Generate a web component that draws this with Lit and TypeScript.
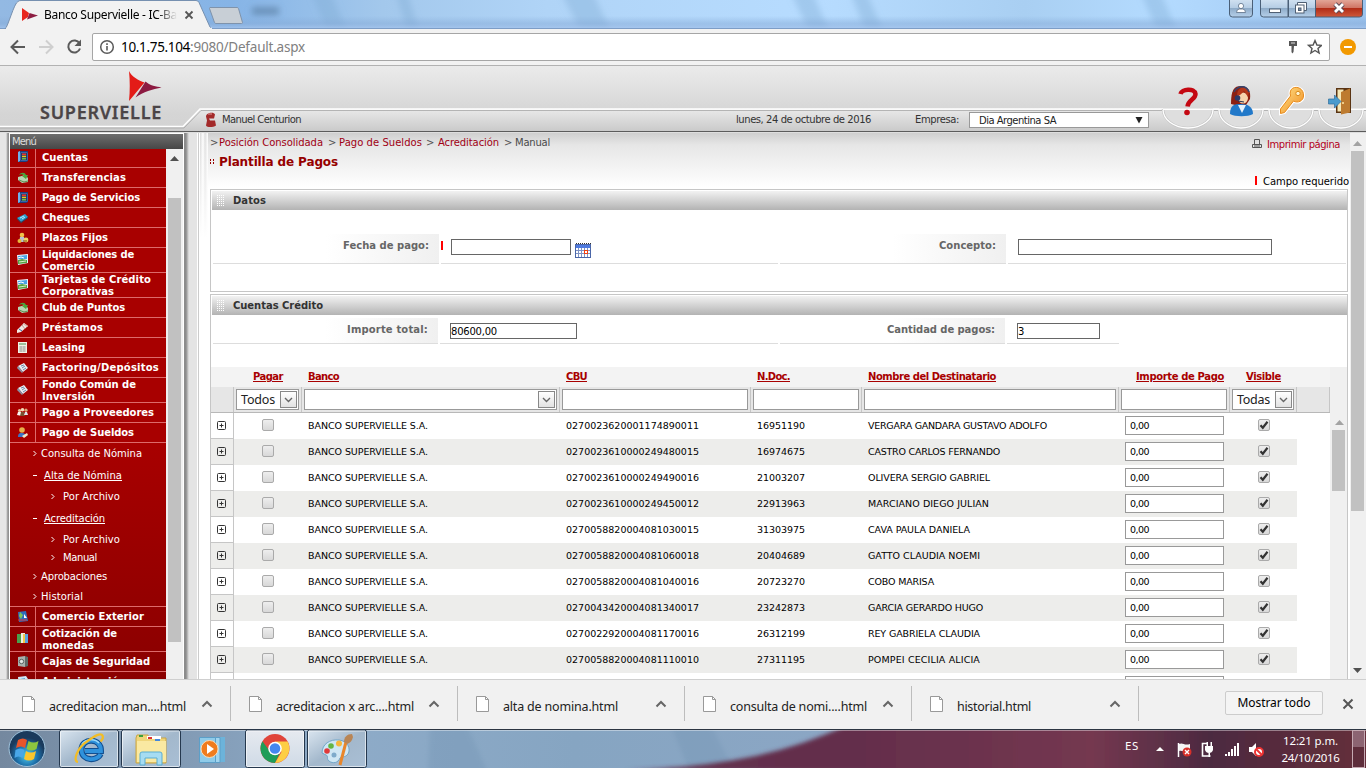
import { LitElement, html, css, svg } from "lit";
import { customElement } from "lit/decorators.js";
import { classMap } from "lit/directives/class-map.js";

type MenuEntry = { icon: string; lines: [string, number][] };

const MENU_TOP: MenuEntry[] = [
  { icon: "book", lines: [["Cuentas", 46]] },
  { icon: "transfer", lines: [["Transferencias", 84]] },
  { icon: "book", lines: [["Pago de Servicios", 98]] },
  { icon: "cheque", lines: [["Cheques", 48]] },
  { icon: "coins", lines: [["Plazos Fijos", 66]] },
  { icon: "photo", lines: [["Liquidaciones de", 92], ["Comercio", 53]] },
  { icon: "photo", lines: [["Tarjetas de Crédito", 109], ["Corporativas", 72]] },
  { icon: "transfer", lines: [["Club de Puntos", 83]] },
  { icon: "pen", lines: [["Préstamos", 61]] },
  { icon: "calc", lines: [["Leasing", 43]] },
  { icon: "card", lines: [["Factoring/Depósitos", 117]] },
  { icon: "card", lines: [["Fondo Común de", 94], ["Inversión", 53]] },
  { icon: "people", lines: [["Pago a Proveedores", 112]] },
  { icon: "user", lines: [["Pago de Sueldos", 92]] },
];

const MENU_BOTTOM: MenuEntry[] = [
  { icon: "globe", lines: [["Comercio Exterior", 102]] },
  { icon: "files", lines: [["Cotización de", 75], ["monedas", 52]] },
  { icon: "safe", lines: [["Cajas de Seguridad", 108]] },
  { icon: "page", lines: [["Administración", 83]] },
];

// [text, width, level, row height]
const SUBMENU: [string, number, string, string][] = [
  ["Consulta de Nómina", 101, "leaf", "h22"],
  ["Alta de Nómina", 78, "open", "h22"],
  ["Por Archivo", 57, "deep", "h20"],
  ["Acreditación", 61, "open", "h23"],
  ["Por Archivo", 57, "deep", "h19"],
  ["Manual", 34, "deep", "h17"],
  ["Aprobaciones", 66, "leaf", "h21"],
  ["Historial", 42, "leaf", "h20"],
];

const PAYEES: [string, string, string, number][] = [
  ["0270023620001174890011", "16951190", "VERGARA GANDARA GUSTAVO ADOLFO", 179],
  ["0270023610000249480015", "16974675", "CASTRO CARLOS FERNANDO", 132],
  ["0270023610000249490016", "21003207", "OLIVERA SERGIO GABRIEL", 122],
  ["0270023610000249450012", "22913963", "MARCIANO DIEGO JULIAN", 121],
  ["0270058820004081030015", "31303975", "CAVA PAULA DANIELA", 102],
  ["0270058820004081060018", "20404689", "GATTO CLAUDIA NOEMI", 112],
  ["0270058820004081040016", "20723270", "COBO MARISA", 66],
  ["0270043420004081340017", "23242873", "GARCIA GERARDO HUGO", 115],
  ["0270022920004081170016", "26312199", "REY GABRIELA CLAUDIA", 112],
  ["0270058820004081110010", "27311195", "POMPEI CECILIA ALICIA", 112],
];

const DOWNLOADS: [string, number][] = [
  ["acreditacion man....html", 137],
  ["acreditacion x arc....html", 138],
  ["alta de nomina.html", 115],
  ["consulta de nomi....html", 137],
  ["historial.html", 74],
];

const ICONS: Record<string, unknown> = {
  book: svg`<path d="M1 1l2-1h8v10l-2 1H1z" fill="#1c3d7c"/><path d="M1 1l2-1v10l-2 1z" fill="#6fb0ea"/><path d="M3.500 1.500h7v8h-7z" fill="#5e8fd0"/><path d="M4 2h6v7H4z" fill="#243a63"/><path d="M5 2.500h4v1.500H5z" fill="#e33"/><path d="M5 4.700h4v1.500H5z" fill="#f5c518"/><path d="M5 7h4v1.500H5z" fill="#6ac04a"/>`,
  transfer: svg`<path d="M1 5l7-2 3 3v4l-6 1-4-3z" fill="#b9d3b2"/><path d="M2 3c2-3 6-3 7 0h2L9 7 5 4h2C6 2 4 2 2 3z" fill="#4ba53c"/><path d="M2 8l5 2 4-1" stroke="#5d8f50" fill="none"/>`,
  cheque: svg`<path d="M0 6l8-4 3 3-7 5z" fill="#2a9fd0"/><path d="M0 6l4 4v1L0 7zM4 10l7-5v1l-7 5z" fill="#0d5677"/><path d="M3 6l4-2M5 7l3-2" stroke="#bfe9f8"/>`,
  coins: svg`<circle cx="5" cy="3" r="2.3" fill="#f0c24a"/><path d="M2 10l1-5h4l1 5z" fill="#b8bfd4"/><circle cx="2.5" cy="9" r="2" fill="#e8b83a"/><circle cx="9" cy="8" r="2.4" fill="#f2d166"/><path d="M6 9h4" stroke="#7a5410"/>`,
  photo: svg`<path d="M0 1l11-1v9L1 11z" fill="#eaf5ff"/><path d="M1 2l9-1v4H1z" fill="#4aa3e6"/><path d="M1 4l3-1 3 1" stroke="#fff" fill="none"/><path d="M1 6l4-1 5 1v3l-9 1z" fill="#56a543"/><path d="M2 8l7-1" stroke="#d9ecc9"/>`,
  pen: svg`<path d="M0 8l7-7 4 3-7 6-4 1z" fill="#f0e9e3"/><path d="M5 3l3 4" stroke="#c09a8c"/><path d="M7 1l4 3-1 1-4-3z" fill="#d9b3a6"/><path d="M2 7l3 2" stroke="#3b68a8"/>`,
  calc: svg`<path d="M1 0h9v11H1z" fill="#f1f1e6"/><path d="M2 1h7v2H2z" fill="#9fc09a"/><path d="M2 5h7M2 7h7M2 9h7M4 4v6M7 4v6" stroke="#9a9a92" stroke-width=".7"/>`,
  card: svg`<path d="M1 4l6-3 4 5-5 4z" fill="#e8edf3"/><path d="M1 4l5 6-1 1-5-5z" fill="#8795a8"/><path d="M4 4l3-1M5 6l3-2M6 8l3-2" stroke="#3b5c83" stroke-width=".7"/>`,
  people: svg`<circle cx="2.5" cy="3.5" r="1.6" fill="#e9c7a0"/><circle cx="5.5" cy="2.8" r="1.8" fill="#f3d7b4"/><circle cx="9" cy="3.2" r="1.6" fill="#d8a87a"/><path d="M0 8l1-3h3l1 4z" fill="#f4f4f4"/><path d="M3 9l1-4h3l1 4z" fill="#7a5030"/><path d="M7 8l1-3h2l1 3z" fill="#dfe6ee"/>`,
  user: svg`<circle cx="5" cy="3" r="2.8" fill="#e8b04a"/><path d="M1 10c0-4 2-4 4-4s4 1 4 4z" fill="#3d6fc4"/><path d="M5 9l5-3 1 2-4 3z" fill="#f3e7c4"/>`,
  globe: svg`<path d="M1 1l8-1 2 10-9 1z" fill="#2e6dbb"/><path d="M3 1l3 3-2 4-2-3z" fill="#7ec25b"/><path d="M7 3l3 4H7z" fill="#fff"/><path d="M1 9h9" stroke="#d33"/>`,
  files: svg`<path d="M0 1h4v9H0z" fill="#4aa04d"/><path d="M4 0h4v10H4z" fill="#f2efe0"/><path d="M6 1h2v9H6z" fill="#f2c94a"/><path d="M8 1h3v9H8z" fill="#58a3dd"/>`,
  safe: svg`<path d="M1 1l7-1v11l-7-1z" fill="#a8b0ac"/><path d="M8 0l3 1v9l-3 1z" fill="#5f6b68"/><circle cx="4.5" cy="5.5" r="2.2" fill="#dfe4e2" stroke="#58625f"/>`,
  page: svg`<path d="M1 1l8-1 2 3v8l-9 1z" fill="#cfe6f5"/><path d="M3 3l5-1v4l-5 1z" fill="#5ba4cf"/>`,
};

/** Text that is tracked to an exact width in pixels. */
const t = (text: string, width: number) => html`<span class="fit" data-w=${width}>${text}</span>`;

@customElement("app-root")
export class AppRoot extends LitElement {
  static styles = css`
    :host { display: block; width: 1366px; height: 768px; overflow: hidden; background: #fff; font-family: "DejaVu Sans", Verdana, sans-serif; font-size: 10px; color: #000; }
    * { box-sizing: border-box; }
    svg { display: block; flex: none; }
    .fit { display: inline-block; white-space: nowrap; flex: none; }
    .stack { display: grid; }
    .stack > * { grid-area: 1 / 1; }
    .ui { font-family: "Noto Sans", "Open Sans", sans-serif; font-size: 12px; }

    .titlebar { height: 29px; }
    .tab { display: flex; align-items: center; padding-left: 44px; height: 29px; }
    .tab .name { width: 133px; overflow: hidden; -webkit-mask-image: linear-gradient(90deg, #000 85%, transparent); }

    .toolbar { height: 37px; background: #f2f2f2; border-bottom: 1px solid #b2b2b2; display: flex; align-items: center; padding-bottom: 1px; }
    .omnibox { width: 1238px; height: 28px; background: #fff; border: 1px solid #a6a6a6; border-radius: 2px; display: flex; align-items: center; padding: 0 7px 0 6px; }
    .omnibox .url { flex: 1; padding-left: 6px; font-size: 13.5px; color: #808080; display: flex; }
    .black { color: #000; }

    .header { height: 67px; }
    .brand { display: flex; flex-direction: column; align-items: flex-start; padding: 36px 0 0 40px; font: 600 18px/20px "Noto Sans", sans-serif; color: #4b4547; -webkit-text-stroke: .3px #4b4547; }
    .session { display: flex; align-items: center; height: 21px; padding-left: 222px; margin-top: 43px; color: #333; }
    .who { width: 514px; }
    .date { width: 179px; }
    .company { width: 54px; }
    .combo { width: 180px; height: 16px; border: 1px solid #999; background: #fff; display: flex; align-items: center; justify-content: space-between; padding: 0 5px 0 9px; color: #222; margin-top: 1px; }

    .body { height: 546px; display: flex; overflow: hidden; }
    .rail { width: 10px; background: linear-gradient(90deg, #e6e6e6 0 6px, #bbb 7px, #8c8c8c 8px, #999 9px, #fff 9px); }
    .rail2 { width: 17px; background: linear-gradient(90deg, #fff 1px, #8c8c8c 1px 3px, #aaa 4px, #e4e4e4 6px 14px, #fff 14px 15px, #ccc 15px 16px, #fff 16px); }
    .side { width: 173px; display: flex; flex-direction: column; padding-top: 1px; }
    .sidehead { height: 15px; background: linear-gradient(#6e6e6e, #474747); color: #ddd; padding-left: 2px; line-height: 16px; font-size: 10px; }
    .sidebody { height: 530px; display: flex; }
    .menu { width: 156px; height: 530px; overflow: hidden; background: linear-gradient(#a80000 0 55%, #8a0000); color: #fff; }
    .item { display: flex; height: 20px; border-bottom: 1px solid #dd6a6a; font-weight: 700; line-height: 12px; }
    .item.first { height: 19px; }
    .item.two { height: 25px; }
    .ico { width: 26px; border-right: 1px solid #dd6a6a; display: flex; align-items: center; padding-left: 7px; }
    .lab { padding-left: 6px; display: flex; flex-direction: column; justify-content: center; padding-top: 1px; }
    .item.first .lab, .item.first .ico { padding-bottom: 2px; }
    .submenu { height: 164px; border-bottom: 1px solid #dd6a6a; }
    .sub { display: flex; align-items: center; gap: 6px; padding-bottom: 1px; }
    .leaf { padding-left: 23px; gap: 4px; }
    .open { padding-left: 23px; gap: 7px; }
    .open .fit { text-decoration: underline; }
    .deep { padding-left: 41px; gap: 8px; }
    .h17 { height: 17px; } .h19 { height: 19px; } .h20 { height: 20px; } .h21 { height: 21px; } .h22 { height: 22px; } .h23 { height: 23px; }

    .main { width: 1150px; height: 546px; display: flex; }
    .shade { width: 8px; height: 546px; background: linear-gradient(transparent, #fff 105px), linear-gradient(90deg, #d8d8d8, #fff 3px, #ddd 5px, #fff); }
    .page { width: 1142px; padding: 1px 1px 0 2px; background: linear-gradient(#cfcfcf, #e6e6e6 12px, #fff 54px); height: 546px; overflow: hidden; }
    .crumbs { display: flex; justify-content: space-between; height: 18px; align-items: center; color: #555; padding-right: 9px; }
    .trail { display: flex; padding-bottom: 1px; }
    .trail a { color: #a00014; }
    .trail .here { color: #4a4a4a; }
    .g9 { width: 9px; } .g109 { width: 109px; } .g11 { width: 11px; } .g87 { width: 87px; } .g12 { width: 12px; } .g66 { width: 66px; }
    .print { display: flex; align-items: center; gap: 5px; color: #b3001b; padding-top: 2px; }
    .title { display: flex; height: 19px; align-items: center; color: #960000; font: 700 12px "DejaVu Sans", sans-serif; gap: 5px; }
    .required { display: flex; height: 18px; align-items: center; justify-content: flex-end; gap: 6px; padding-top: 2px; }
    .bar { width: 2px; height: 9px; background: #f00; }
    .required .bar { margin-bottom: 2px; }
    .panel { border: 1px solid #c6c6c6; background: #fff; padding-top: 1px; width: 1138px; }
    .datos { height: 103px; margin-bottom: 2px; }
    .credito { height: 400px; }
    .phead { height: 19px; background: linear-gradient(#f2f2f2, #b3b3b3); margin-left: 1px; display: flex; align-items: center; gap: 9px; padding-left: 4px; font-weight: 700; color: #333; }
    .frow { display: flex; gap: 2px; padding-left: 2px; }
    .datos .frow { height: 30px; margin-top: 24px; }
    .credito .frow { height: 26px; margin-top: 3px; }
    .flabel { width: 226px; display: flex; justify-content: flex-end; padding: 5px 10px 0 0; background: linear-gradient(90deg, #fff 50%, #f0f0f0); border-bottom: 1px solid #ddd; color: #666; font-weight: 700; line-height: 13px; }
    .credito .flabel { width: 225px; }
    .fval { border-bottom: 1px solid #ddd; display: flex; padding: 5px 0 0 10px; }
    .datos .fval.req { padding-left: 0; gap: 8px; }
    .req .bar { margin-top: 2px; }
    .box { height: 16px; border: 1px solid #666; background: #fff; display: flex; align-items: center; }
    .wa { width: 337px; } .wb { width: 338px; } .wc { width: 112px; } .wd { width: 338px; }
    .i120 { width: 120px; } .i254 { width: 254px; } .i127 { width: 127px; } .i83 { width: 83px; }
    .cal { padding-top: 3px; margin-left: -4px; }

    .grid { display: flex; margin-top: 23px; width: 1136px; }
    .tbl { width: 1119px; }
    .tscroll { width: 17px; background: #f0f0f0; height: 330px; padding: 50px 0 0 2px; display: flex; flex-direction: column; gap: 5px; }
    .tscroll svg { margin-left: 3px; margin-top: 3px; }
    .thumb { width: 13px; background: #c1c1c1; }
    .t61 { height: 61px; } .t360 { height: 360px; } .t444 { height: 444px; }
    .cols { display: grid; grid-template-columns: 23px 68px 258px 191px 111px 257px 111px 67px 33px; }
    .thead { height: 20px; background: #f3f3f3; color: #a80000; font-weight: 700; align-items: center; padding-bottom: 1px; }
    .thead .fit { text-decoration: underline; }
    .thead > * { padding-left: 6px; }
    .thead .mid { padding-left: 0; text-align: center; }
    .thead .end { text-align: right; padding-right: 6px; }
    .tfilter { height: 26px; background: #e6e6e6; border-bottom: 1px solid #b8b8b8; }
    .tfilter > * { border-right: 1px solid #c6c6c6; padding: 2px; display: flex; }
    .fbox { flex: 1; height: 21px; background: #fff; border: 1px solid #999; display: flex; align-items: center; justify-content: space-between; padding: 0 1px 0 4px; font: 12.5px/17px "Noto Sans", sans-serif; color: #222; }
    .fbox .fit { margin-top: -1px; }
    .drop { width: 17px; height: 17px; border: 1px solid #888; background: linear-gradient(#fff, #e2e2e2); display: flex; align-items: center; justify-content: center; margin-left: auto; }
    .trow { height: 26px; font-size: 9.5px; background: #fff; width: 1086px; grid-template-columns: 23px 68px 258px 191px 111px 257px 111px 67px; }
    .trow.alt { background: #ededeb; }
    .trow > * { display: flex; align-items: center; padding: 0 0 1px 6px; }
    .trow .plus { border-right: 1px solid #c6c6c6; border-bottom: 1px solid #c6c6c6; padding-bottom: 0; }
    .trow .mid { padding: 0; justify-content: center; padding-bottom: 2px; }
    .amount { width: 99px; height: 19px; border: 1px solid #999; background: #fff; padding-left: 4px; display: flex; align-items: center; }
    .check { width: 12px; height: 12px; border: 1px solid #aaa; border-radius: 2px; background: linear-gradient(#eee, #d8d8d8); }

    .vscroll { width: 16px; background: #f0f0f0; display: flex; flex-direction: column; align-items: center; height: 546px; padding: 8px 1px 0 0; }
    .vscroll .thumb { margin-top: 5px; }
    .vscroll .down { margin-top: 157px; }
    .mscroll { width: 17px; background: #f0f0f0; height: 530px; padding: 7px 0 0 2px; }
    .mscroll svg { margin: 0 0 37px 2px; }

    .shelf { height: 50px; background: #f1f1f1; border-top: 1px solid #cfcfcf; display: flex; align-items: center; padding-bottom: 2px; }
    .dl { width: 227px; display: flex; align-items: center; height: 35px; padding-left: 18px; }
    .dl + .dl { border-left: 1px solid #bdbdbd; }
    .dl:first-child { padding-left: 22px; width: 230px; }
    .dl .nm { width: 166px; padding: 5px 0 0 14px; color: #222; font-size: 12.5px; }
    .dlend { border-left: 1px solid #bdbdbd; height: 35px; width: 87px; }
    .all { width: 98px; height: 24px; border: 1px solid #ccc; border-radius: 2px; background: #f4f4f4; display: flex; align-items: center; justify-content: center; margin: -2px 19px 0 0; }

    .taskbar { height: 39px; }
    .tray { display: flex; color: #fff; padding-left: 1125px; font-size: 11.5px; line-height: 17px; }
    .es { padding-top: 8px; width: 148px; }
    .clock { padding-top: 3px; width: 75px; display: flex; flex-direction: column; align-items: center; }
  `;

  protected firstUpdated() {
    this.renderRoot.querySelectorAll<HTMLElement>(".fit").forEach((el) => {
      const extra = Number(el.dataset.w) - el.getBoundingClientRect().width;
      const n = (el.textContent ?? "").length;
      el.style.letterSpacing = `${extra / n}px`;
    });
  }

  private arrow(up: boolean, color = "#505050") {
    return html`<svg width="9" height="5"><path d=${up ? "M0 5L4.5 0 9 5z" : "M0 0l4.500 5L9 0z"} fill=${color} /></svg>`;
  }

  private titlebar() {
    return html`<div class="titlebar stack">
      <svg width="1366" height="29">
        <defs>
          <linearGradient id="sky"><stop offset="0" stop-color="#93b9e3"/><stop offset=".17" stop-color="#86b4e6"/><stop offset=".28" stop-color="#a3c8ec"/><stop offset=".4" stop-color="#b0d4f7"/><stop offset=".6" stop-color="#b7dcff"/><stop offset=".75" stop-color="#a9cff2"/><stop offset=".85" stop-color="#b4dbff"/><stop offset="1" stop-color="#9dc4ee"/></linearGradient>
          <linearGradient id="fade" x2="0" y2="1"><stop offset=".55" stop-color="#86abd8" stop-opacity="0"/><stop offset=".8" stop-color="#86abd8" stop-opacity=".5"/><stop offset="1" stop-color="#a9c8f0" stop-opacity=".9"/></linearGradient>
          <linearGradient id="btn" x2="0" y2="1"><stop offset="0" stop-color="#cfe0f0"/><stop offset=".5" stop-color="#b3cbe3"/><stop offset=".5" stop-color="#8facc9"/><stop offset="1" stop-color="#b6d0ea"/></linearGradient>
          <linearGradient id="cls" x2="0" y2="1"><stop offset="0" stop-color="#e2a597"/><stop offset=".45" stop-color="#d07565"/><stop offset=".5" stop-color="#b22d18"/><stop offset="1" stop-color="#cf5a3c"/></linearGradient>
          <filter id="soft"><feGaussianBlur stdDeviation="3"/></filter>
        </defs>
        <rect width="1366" height="29" fill="url(#sky)"/>
        <g filter="url(#soft)"><path d="M310 -9h20l20 47h-20zM395 -9h12l14 47h-12zM560 -9h32l22 47h-30zM790 -9h22l20 47h-20zM850 -9h16l20 47h-18zM1140 -9h20l20 47h-20z" fill="#80add4" opacity=".4"/><rect x="252" y="7" width="27" height="8" fill="#55789c" opacity=".6"/></g>
        <rect width="1366" height="29" fill="url(#fade)"/>
        <path d="M0 28.500H1366" stroke="#7d9dc6"/>
        <path d="M5 29C8 27 14 3 18 1.500q1-1 3-1h175q2 0 3 2L210 27l2 2z" fill="#f2f2f2" stroke="#7690b0"/>
        <path d="M6 28.600h206" stroke="#f2f2f2" stroke-width="1.500"/>
        <path d="M210 7.500h27q1 0 1.500 1l4 14q0 1-1 1H216q-1 0-1.500-1l-5-14q0-1 .5-1z" fill="#c8cfd6" stroke="#7f93ab"/>
        <path d="M22 8l7 5-1 4-6 4z" fill="#e8251e"/><path d="M29.500 13l8.500 2.500-11 4z" fill="#8d1d42"/>
        <path d="M185.500 11.500l7 7m0-7l-7 7" stroke="#555" stroke-width="1.800"/>
        <g stroke="#4a5f77"><path d="M1229.500 0v14q0 3 3 3h17q3 0 3-3V0" fill="url(#btn)"/><path d="M1260.500 0v14q0 3 3 3h24.500V0" fill="url(#btn)"/><path d="M1288.500 0v17h27V0" fill="url(#btn)"/><path d="M1315.500 0v17h44q3 0 3-3V0" fill="url(#cls)"/></g>
        <circle cx="1241" cy="6" r="2.600" fill="#fff" stroke="#5b6f86" stroke-width=".8"/><path d="M1236.500 12.500q0-3.500 3-3.500h3q3 0 3 3.500z" fill="#fff" stroke="#5b6f86" stroke-width=".8"/>
        <rect x="1269.500" y="9" width="11" height="3.500" fill="#fff" stroke="#4f5f73"/>
        <path d="M1297.500 2.500h9v8h-9z" fill="#fff" stroke="#4f5f73"/><rect x="1295.500" y="5" width="8.500" height="8" fill="#fff" stroke="#4f5f73"/><rect x="1298.500" y="8" width="2.500" height="2.500" fill="#7890ab" stroke="#4f5f73"/>
        <path d="M1335 4l8 8m0-8l-8 8" stroke="#5c4a55" stroke-width="4.600"/><path d="M1335 4l8 8m0-8l-8 8" stroke="#fff" stroke-width="2.800"/>
      </svg>
      <div class="tab ui"><div class="name">${t("Banco Supervielle - IC-Ba", 133)}</div></div>
    </div>`;
  }

  private toolbar() {
    return html`<div class="toolbar">
      <svg width="92" height="34" fill="none" stroke="#5a5a5a" stroke-width="2"><path d="M25 17H12m6-6.500L11.500 17l6.500 6.500"/><path d="M39 17h13m-6-6.500l6.500 6.500-6.500 6.500" stroke="#cfcfcf"/><path d="M79.500 13.500a6 6 0 1 0 .5 5"/><path d="M81 9.500v6.500h-6.500z" fill="#5a5a5a" stroke="none"/></svg>
      <div class="omnibox ui">
        <svg width="16" height="16"><circle cx="8" cy="8" r="6.300" fill="none" stroke="#5a5a5a" stroke-width="1.500"/><path d="M8 7v4.500M8 4.300v1.600" stroke="#5a5a5a" stroke-width="1.600"/></svg>
        <div class="url"><span class="black">${t("10.1.75.104", 69)}</span>${t(":9080/Default.aspx", 115)}</div>
        <svg width="38" height="18"><path d="M5 3h8v5h-3l-.500 6-1.200 1.500-.8-1.500V8H5z" fill="#555"/><path d="M7 5h4" stroke="#ddd"/><path d="M31 2.500l1.900 4.500 4.600.400-3.500 3 1.100 4.600-4.100-2.500-4.100 2.500 1.100-4.600-3.500-3 4.600-.400z" fill="none" stroke="#555" stroke-width="1.400"/></svg>
      </div>
      <svg width="36" height="20"><circle cx="18" cy="10" r="8" fill="#f29900"/><path d="M14 10h8" stroke="#fff" stroke-width="2"/></svg>
    </div>`;
  }

  private header() {
    return html`<div class="header stack">
      <svg width="1366" height="67">
        <defs><linearGradient id="h1" x2="0" y2="1"><stop offset="0" stop-color="#ebebeb"/><stop offset=".7" stop-color="#d5d5d5"/><stop offset="1" stop-color="#d2d2d2"/></linearGradient><linearGradient id="h2" x2="0" y2="1"><stop offset="0" stop-color="#e9e9e9"/><stop offset="1" stop-color="#cacaca"/></linearGradient>
        <linearGradient id="key" x2="1" y2="1"><stop offset="0" stop-color="#ffe38a"/><stop offset="1" stop-color="#f08a1c"/></linearGradient></defs>
        <rect width="1366" height="67" fill="url(#h1)"/>
        <path d="M0 61h184l17-18h1165v22H0z" fill="url(#h2)"/>
        <path d="M0 60.500h183l17-17.500h1166" fill="none" stroke="#fff" stroke-width="1.500"/><path d="M0 62h184l17-17.500h1165" fill="none" stroke="#a8a8a8" opacity=".8"/>
        <path d="M0 65h1366v2H0z" fill="#5c5c5c"/><path d="M0 66.500h1366" stroke="#fff" opacity=".8"/>
        <path d="M129 5c2 5 10 10 15.500 11.500L129 35c1-10 1-20 0-30z" fill="#e31b17"/><path d="M145.500 15.500c4 4 11 5 16 6-9 2-18 4-26 10z" fill="#8c1a41"/>
        <g transform="translate(0 -2.500)"><path d="M206 53c0-4 8-5 9-2l-1 4h-5l1 2h5l1 5c-3 2-9 2-10 0l1-5z" fill="#a32a2a"/><path d="M208 50.500h4" stroke="#e09a9a"/></g>
        ${[1188, 1241, 1291, 1341].map((x, i) => { const r = i ? 22 : 25; return svg`<path d=${`M${x - r} 42.500h${2 * r}a${r} 19.500 0 0 1 ${-2 * r} 0z`} fill="#dedede"/><path d=${`M${x - r} 43a${r} 19 0 0 0 ${2 * r} 0`} fill="none" stroke="#c4c4c4" stroke-width="2.500"/><path d=${`M${x - r} 43.500a${r} 18.500 0 0 0 ${2 * r} 0`} fill="none" stroke="#fff" stroke-width="1.300"/>`; })}
        <path d="M1163 43.500h203" stroke="#fff"/>
        <path d="M1180.500 28c1-5 14-6.500 15 0 0 5.500-7 5.500-8 12.500" fill="none" stroke="#c40812" stroke-width="4.500"/><circle cx="1187" cy="46.500" r="2.800" fill="#c40812"/>
        <path d="M1231 38c0-14 3-18 10-18s10 5 9 13l-4 6h-11z" fill="#8c2012"/><ellipse cx="1243" cy="32" rx="5" ry="5.500" fill="#f6d3ad"/><path d="M1237 30c3 0 5-3 7-5l4 6 1-6c-4-6-12-4-12 5z" fill="#b3381b"/><path d="M1230 48c0-9 4-10 11-10s12 3 12 10c-5 3-18 3-23 0z" fill="#2279c9"/><path d="M1238 39l4 8 4-8z" fill="#e7f2fb"/><circle cx="1237.500" cy="32" r="2.800" fill="#2b3968"/><path d="M1234 26c3-6 12-8 15 0" fill="none" stroke="#33446f" stroke-width="1.500"/><path d="M1238 35l6 1" stroke="#26304f"/>
        <path d="M1293.500 35l-9 11.500-4 1v-4.500l10-13c-3-12 14-11 13 0 0 5-6 7.500-10 5z" fill="url(#key)" stroke="#fff" stroke-width="3"/><path d="M1293.500 35l-9 11.500-4 1v-4.500l10-13c-3-12 14-11 13 0 0 5-6 7.500-10 5z" fill="url(#key)" stroke="#e78a1b"/><circle cx="1298" cy="27.500" r="2.200" fill="#fff4d0" stroke="#d98b1b"/>
        <path d="M1336 22h15v25h-15z" fill="#5a3413"/><path d="M1337.500 23.500h6v22h-6z" fill="#f6e7b5"/><path d="M1341 26l9-3.500v24l-9 2z" fill="#bd7b30"/><circle cx="1343" cy="37" r="1" fill="#ffe9a8"/><path d="M1328.500 33h6v-4l6.500 6.500-6.500 6.500v-4h-6z" fill="#4a9bcd" stroke="#2f6f9c" stroke-width=".7"/>
      </svg>
      <div class="brand">${t("SUPERVIELLE", 122)}</div>
      <div class="session">
        <div class="who">${t("Manuel Centurion", 79)}</div><div class="date">${t("lunes, 24 de octubre de 2016", 135)}</div><div class="company">${t("Empresa:", 44)}</div>
        <div class="combo">${t("Dia Argentina SA", 77)}<svg width="8" height="8"><path d="M.5 1h7L4 7.500z" fill="#222"/></svg></div>
      </div>
    </div>`;
  }

  private entry(m: MenuEntry, first = false) {
    return html`<div class=${classMap({ item: true, first, two: m.lines.length > 1 })}>
      <div class="ico"><svg width="12" height="12">${ICONS[m.icon]}</svg></div>
      <div class="lab">${m.lines.map(([s, w]) => html`<div>${t(s, w)}</div>`)}</div>
    </div>`;
  }

  private sidebar() {
    return html`<div class="side">
      <div class="sidehead">${t("Menú", 24)}</div>
      <div class="sidebody">
        <div class="menu">
          ${MENU_TOP.map((m, i) => this.entry(m, i === 0))}
          <div class="submenu">
            ${SUBMENU.map(([s, w, level, h]) => html`<div class=${`sub ${level} ${h}`}>
              <svg width="4" height="7" fill="none" stroke="#fff">${level === "open" ? svg`<path d="M0 3.500h4"/>` : svg`<path d="M.5 1l2.500 2.500L.5 6"/>`}</svg>${t(s, w)}</div>`)}
          </div>
          ${MENU_BOTTOM.map((m) => this.entry(m))}
        </div>
        <div class="mscroll">${this.arrow(true)}<div class="thumb t444"></div></div>
      </div>
    </div>`;
  }

  private panelHead(s: string, w: number) {
    return html`<div class="phead"><svg width="8" height="11"><path d="M1.500 0v11M3.500 0v11M5.500 0v11M7.500 0v11" stroke="#fff" stroke-dasharray="1 1"/></svg>${t(s, w)}</div>`;
  }

  private drop() {
    return html`<div class="drop"><svg width="9" height="6"><path d="M1 1l3.500 3.500L8 1" fill="none" stroke="#666" stroke-width="1.400"/></svg></div>`;
  }

  private row(p: [string, string, string, number] | null, i: number) {
    return html`<div class=${classMap({ cols: true, trow: true, alt: i % 2 === 1 })}>
      <div class="plus"><svg width="10" height="10" fill="none" stroke="#333"><rect x=".5" y=".5" width="8" height="8" rx="1"/><path d="M2.500 4.500h4M4.500 2.500v4"/></svg></div>
      <div class="mid"><div class="check"></div></div>
      <div>${p ? t("BANCO SUPERVIELLE S.A.", 120) : ""}</div>
      <div>${p ? t(p[0], 133) : ""}</div>
      <div>${p ? t(p[1], 48) : ""}</div>
      <div>${p ? t(p[2], p[3]) : ""}</div>
      <div><div class="amount">${p ? t("0,00", 19) : ""}</div></div>
      <div class="mid"><div class="check"><svg width="10" height="10"><path d="M1.500 5.200l2.300 2.500L8.500 1.800" fill="none" stroke="#333" stroke-width="2.200"/></svg></div></div>
    </div>`;
  }

  private page() {
    return html`<div class="page">
      <div class="crumbs">
        <div class="trail">
          <div class="g9">${t(">", 7)}</div><a class="g109">${t("Posición Consolidada", 104)}</a>
          <div class="g11">${t(">", 7)}</div><a class="g87">${t("Pago de Sueldos", 83)}</a>
          <div class="g12">${t(">", 7)}</div><a class="g66">${t("Acreditación", 61)}</a>
          <div class="g11">${t(">", 7)}</div><div class="here">${t("Manual", 35)}</div>
        </div>
        <div class="print"><svg width="10" height="10" fill="none" stroke="#555"><path d="M2.500 5V.5h5V5M.5 5.500h9v3h-9zM2 7h6"/></svg>${t("Imprimir página", 73)}</div>
      </div>
      <div class="title"><svg width="4" height="5" fill="#960000"><path d="M0 0h1v2H0zM3 0h1v2H3zM0 3h1v2H0zM3 3h1v2H3z"/></svg>${t("Plantilla de Pagos", 119)}</div>
      <div class="required"><div class="bar"></div>${t("Campo requerido", 86)}</div>
      <div class="panel datos">
        ${this.panelHead("Datos", 33)}
        <div class="frow">
          <div class="flabel">${t("Fecha de pago:", 86)}</div>
          <div class="fval req wa"><div class="bar"></div><div class="box i120"></div>
            <div class="cal"><svg width="16" height="16"><rect x=".5" y="2.500" width="15" height="13" fill="#fff" stroke="#4a66a8"/><path d="M1 3h14v3H1z" fill="#4f7ae0"/><path d="M1 8.500h14M1 11.500h14M3.500 6v9M6.500 6v9M9.500 6v9M12.500 6v9" stroke="#7f93c4"/><path d="M1 1.500h15" stroke="#333" stroke-dasharray="1 1"/><rect x="9.500" y="8.500" width="3" height="3" fill="#fff" stroke="#f04010"/></svg></div>
          </div>
          <div class="flabel">${t("Concepto:", 57)}</div>
          <div class="fval wb"><div class="box i254"></div></div>
        </div>
      </div>
      <div class="panel credito">
        ${this.panelHead("Cuentas Crédito", 90)}
        <div class="frow">
          <div class="flabel">${t("Importe total:", 81)}</div>
          <div class="fval wd"><div class="box i127">${t("80600,00", 46)}</div></div>
          <div class="flabel">${t("Cantidad de pagos:", 108)}</div>
          <div class="fval wc"><div class="box i83">${t("3", 6)}</div></div>
        </div>
        <div class="grid">
          <div class="tbl">
            <div class="cols thead"><div></div><div class="mid">${t("Pagar", 30)}</div><div>${t("Banco", 31)}</div><div>${t("CBU", 21)}</div><div>${t("N.Doc.", 33)}</div><div>${t("Nombre del Destinatario", 128)}</div><div class="end">${t("Importe de Pago", 88)}</div><div class="mid">${t("Visible", 35)}</div></div>
            <div class="cols tfilter"><div></div><div><div class="fbox">${t("Todos", 34)}${this.drop()}</div></div><div><div class="fbox">${this.drop()}</div></div><div><div class="fbox"></div></div><div><div class="fbox"></div></div><div><div class="fbox"></div></div><div><div class="fbox"></div></div><div><div class="fbox">${t("Todas", 33)}${this.drop()}</div></div><div></div></div>
            ${PAYEES.map((p, i) => this.row(p, i))}
            ${this.row(null, 10)}
          </div>
          <div class="tscroll">${this.arrow(true, "#a3a3a3")}<div class="thumb t61"></div></div>
        </div>
      </div>
    </div>`;
  }

  private taskbar() {
    return html`<div class="taskbar stack">
      <svg width="1366" height="39">
        <defs>
          <linearGradient id="tb"><stop offset="0" stop-color="#74889f"/><stop offset=".25" stop-color="#8eabc8"/><stop offset=".42" stop-color="#86a5c2"/><stop offset=".6" stop-color="#8ba6c4"/></linearGradient>
          <linearGradient id="wine"><stop offset="0" stop-color="#65324e"/><stop offset=".3" stop-color="#642e4c"/><stop offset=".6" stop-color="#743850"/><stop offset=".75" stop-color="#4c2a40"/><stop offset="1" stop-color="#6b3038"/></linearGradient>
          <linearGradient id="act" x2="1" y2="1"><stop offset="0" stop-color="#dbe6f0"/><stop offset=".5" stop-color="#a3b8cc"/><stop offset="1" stop-color="#a9bfd5"/></linearGradient>
          <linearGradient id="act2" x2="0" y2="1"><stop offset="0" stop-color="#e6eaf0"/><stop offset="1" stop-color="#cfdae6"/></linearGradient>
          <radialGradient id="orb" cy=".7"><stop offset="0" stop-color="#4fd0f5"/><stop offset=".6" stop-color="#1c6ea8"/><stop offset="1" stop-color="#1a3a5c"/></radialGradient>
          <filter id="b2"><feGaussianBlur stdDeviation="2"/></filter>
        </defs>
        <rect width="1366" height="39" fill="url(#tb)"/>
        <path d="M430 -6h36l22 50h-60zM670 -6h40l25 50h-45z" fill="#7394b3" opacity=".35" filter="url(#b2)"/>
        <path d="M625 41C730 38 790 22 845 -3h560v50z" fill="url(#wine)" filter="url(#b2)"/>
        <path d="M0 .5h1366" stroke="#2c3542"/><path d="M0 1.500h1366" stroke="#fff" opacity=".4"/>
        <g stroke="#25384e"><rect x="59.500" y="1" width="59" height="37.500" rx="2" fill="url(#act)"/><rect x="121.500" y="1" width="59" height="37.500" rx="2" fill="url(#act)"/><rect x="245.500" y="1" width="59" height="37.500" rx="2" fill="url(#act2)"/><rect x="307.500" y="1" width="59" height="37.500" rx="2" fill="url(#act)"/></g>
        <g fill="none" stroke="#fff" opacity=".6"><rect x="60.500" y="2" width="57" height="35.500" rx="1"/><rect x="122.500" y="2" width="57" height="35.500" rx="1"/><rect x="246.500" y="2" width="57" height="35.500" rx="1"/><rect x="308.500" y="2" width="57" height="35.500" rx="1"/></g>
        <circle cx="27" cy="19.500" r="18" fill="url(#orb)" stroke="#9fc3dc"/>
        <path d="M18 11q5-3 9 0l-2 8q-4-3-9 0z" fill="#e8562b"/><path d="M28.500 12q5 3 10 0l-2 8q-5 3-10 0z" fill="#8cc63f"/><path d="M15.500 21q5-3 9 0l-2 8q-4-3-8 0z" fill="#49a7e8"/><path d="M26 22q5 3 10 0l-2 8q-5 3-10 0z" fill="#fbc62d"/>
        <g transform="translate(-1 1)"><path d="M101.500 24c-2.500 7-19 8-19-4.500 0-12 20-12 19.500 1.500H86" fill="none" stroke="#124f90" stroke-width="6"/><path d="M101.500 24c-2.500 7-19 8-19-4.500 0-12 20-12 19.500 1.500H86" fill="none" stroke="#2f92dc" stroke-width="3.800"/><path d="M83 14c4-5 13-6 17-1" fill="none" stroke="#9bd9fa" stroke-width="1.500"/><path d="M79 32c-6-1 0-15 9-20.500 8-6 14-9 15.500-6s-1 5-2 6" fill="none" stroke="#f3bd25" stroke-width="2.200"/></g>
        <path d="M136 9l1-3h11l1 3h17v25h-30z" fill="#f0d67a" stroke="#c9a545"/><path d="M137 12h29v21h-29z" fill="#fae9a2"/><path d="M147 7h14v3h-14z" fill="#fff"/><path d="M139 6h4v2h-4z" fill="#3ca03c"/><path d="M148 8h4v2h-4z" fill="#d33"/><path d="M155 10h5v2h-5z" fill="#48d"/><path d="M140 36V25q0-2 2-2h18q2 0 2 2v11h-5v-7h-12v7z" fill="#a6dcf2" stroke="#5badd2"/>
        <path d="M208 8h17v25h-17z" fill="#6cb3da"/><path d="M204 8.500h16v25h-16z" fill="#a2d5ef" stroke="#5c9fc8"/><path d="M199.500 8.500h16v25h-16z" fill="#8fcbe9" stroke="#5c9fc8"/><circle cx="209.500" cy="20" r="8.500" fill="#f07c1e" stroke="#fbdcb5"/><path d="M207 15l7 5-7 5z" fill="#fff"/>
        <circle cx="275" cy="19.500" r="14.500" fill="#e0443a"/><path d="M262.400 12.300A14.500 14.500 0 0 0 275 34l5.500-11.500H270z" fill="#1f9d58"/><path d="M275 34a14.500 14.500 0 0 0 12.600-21.500H275L281.500 23z" fill="#fdce44"/><circle cx="275" cy="19.500" r="6.800" fill="#fff"/><circle cx="275" cy="19.500" r="5.300" fill="#4587ef"/>
        <path d="M322 24c0-9 8-14 17-13 9 1 12 9 9 14-3 4-6 2-8 4-2 5-7 6-11 3-3-2 0-5-3-6z" fill="#cfe7f4" stroke="#71a5c8"/><circle cx="327" cy="22" r="2.800" fill="#e03a3a"/><circle cx="331" cy="17" r="2.800" fill="#63b545"/><circle cx="339" cy="14.500" r="3" fill="#f6b73c"/><circle cx="334" cy="26" r="2.500" fill="#7eabcb"/><path d="M340 36l6-23" stroke="#e8862b" stroke-width="3"/><path d="M344 13c0-5 3-8 8-8l1 3c-1 4-3 6-6 7z" fill="#b98555"/>
        <path d="M1156 22h8l-4-4z" fill="#fff"/>
        <path d="M1178.500 14v14" stroke="#fff" stroke-width="1.500"/><path d="M1179 15c4-2 5 2 11 0v7c-6 2-7-1-11 0z" fill="#f5f5f5"/><circle cx="1187" cy="23" r="4.500" fill="#d8302a"/><path d="M1185 21l4 4m0-4l-4 4" stroke="#fff" stroke-width="1.400"/>
        <path d="M1208 14.500h-5.500v12.500h8" fill="none" stroke="#fff" stroke-width="1.600"/><path d="M1205 17h8v4q-1 3-4 3t-4-3zM1206.500 13h1.500v4h-1.500zM1210.500 13h1.500v4h-1.500zM1208.500 23h1.500v5h-1.500z" fill="#fff"/>
        <path d="M1225 25h2v2h-2zM1228 23h2v4h-2zM1231 20h2v7h-2zM1234 17h2v10h-2zM1237 14h2v13h-2z" fill="#fff"/>
        <path d="M1249 18h3l4-4v13l-4-4h-3z" fill="#fff"/><circle cx="1259" cy="23" r="4" fill="#fff" stroke="#e33" stroke-width="2"/><path d="M1256 20l6 6" stroke="#e33" stroke-width="2"/>
        <rect x="1352.500" y="1.500" width="12" height="37" fill="#8c6472" stroke="#c5a9b2"/><path d="M1353 18h11v20h-11z" fill="#5e2d3b"/>
      </svg>
      <div class="tray ui"><div class="es">${t("ES", 14)}</div><div class="clock">${t("12:21 p.m.", 55)}${t("24/10/2016", 58)}</div></div>
    </div>`;
  }

  render() {
    return html`
      ${this.titlebar()} ${this.toolbar()} ${this.header()}
      <div class="body">
        <div class="rail"></div>
        ${this.sidebar()}
        <div class="rail2"></div>
        <div class="main"><div class="shade"></div>${this.page()}</div>
        <div class="vscroll">${this.arrow(true, "#a3a3a3")}<div class="thumb t360"></div><div class="down">${this.arrow(false)}</div></div>
      </div>
      <div class="shelf ui">
        ${DOWNLOADS.map(([s, w]) => html`<div class="dl"><svg width="13" height="16"><path d="M.5.500h9l3 3v12H.5z" fill="#fff" stroke="#999"/><path d="M9.500.500v3h3" fill="none" stroke="#999"/></svg><div class="nm">${t(s, w)}</div><svg width="12" height="8"><path d="M1.500 6.500L6 2l4.500 4.500" fill="none" stroke="#666" stroke-width="2"/></svg></div>`)}
        <div class="dlend"></div>
        <div class="all">${t("Mostrar todo", 73)}</div>
        <svg width="12" height="12"><path d="M1.500 1.500l9 9m0-9l-9 9" stroke="#555" stroke-width="2"/></svg>
      </div>
      ${this.taskbar()}
    `;
  }
}
